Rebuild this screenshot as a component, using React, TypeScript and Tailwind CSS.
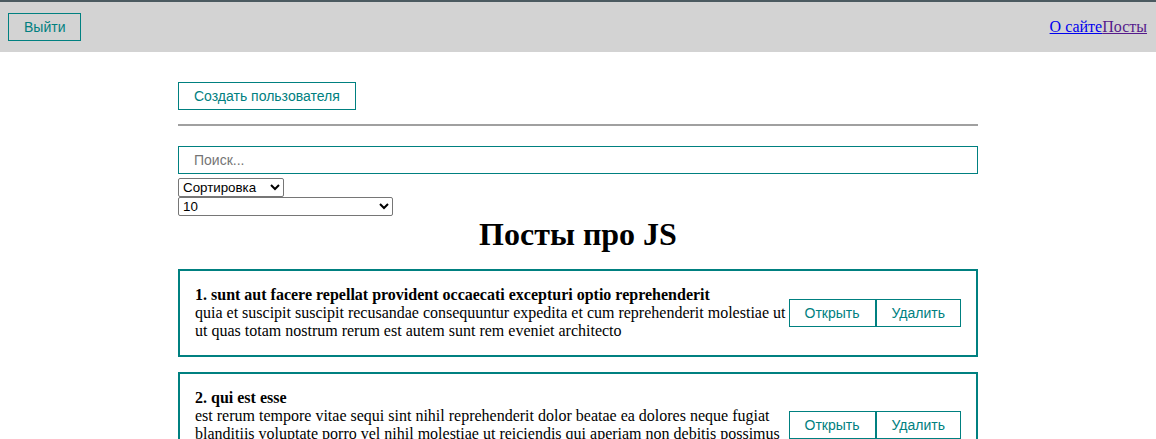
const posts = [
  {
    id: 1,
    title: "sunt aut facere repellat provident occaecati excepturi optio reprehenderit",
    body: "quia et suscipit suscipit recusandae consequuntur expedita et cum reprehenderit molestiae ut ut quas totam nostrum rerum est autem sunt rem eveniet architecto",
  },
  {
    id: 2,
    title: "qui est esse",
    body: "est rerum tempore vitae sequi sint nihil reprehenderit dolor beatae ea dolores neque fugiat blanditiis voluptate porro vel nihil molestiae ut reiciendis qui aperiam non debitis possimus qui neque nisi nulla",
  },
  {
    id: 3,
    title: "ea molestias quasi exercitationem repellat qui ipsa sit aut",
    body: "et iusto sed quo iure voluptatem occaecati omnis eligendi aut ad voluptatem doloribus vel accusantium quis pariatur molestiae porro eius odio et labore et velit aut",
  },
];

const btn =
  "px-[15px] py-[5px] border border-[teal] text-[teal] bg-transparent text-[14px] leading-[16px] font-['Liberation_Sans',Arial,sans-serif]";

const PostItem = ({ post, n }: any) => {
  return (
    <div className="flex items-center justify-between border-2 border-[teal] p-[15px] mb-[15px]">
      <div className="text-black text-[16px] leading-[18px]">
        <strong>
          {n}. {post.title}
        </strong>
        <div>{post.body}</div>
      </div>
      <div className="flex shrink-0">
        <button className={btn}>Открыть</button>
        <button className={btn}>Удалить</button>
      </div>
    </div>
  );
};

export default function App() {
  return (
    <div className="min-h-[439px] bg-white font-['Liberation_Serif','Times_New_Roman',serif]">
      <div className="flex items-center justify-between h-[52px] px-[8px] bg-[lightgray] border-t-2 border-[#4b5a60]">
        <button className={btn}>Выйти</button>
        <div className="text-[16px] pr-[1px]">
          <a href="#" className="text-[#0000ee] underline">
            О сайте
          </a>
          <a href="#" className="text-[#551a8b] underline">
            Посты
          </a>
        </div>
      </div>

      <div className="w-[800px] mx-auto pt-[30px]">
        <button className={btn}>Создать пользователя</button>
        <hr className="mt-[14px] mb-[20px] border-0 border-t-2 border-[#a0a0a0]" />
        <input
          className="block w-full h-[28px] px-[15px] border border-[teal] text-[14px] font-['Liberation_Sans',Arial,sans-serif] placeholder:text-[#757575] outline-none"
          placeholder="Поиск..."
        />
        <div className="mt-[4px] flex flex-col items-start font-['Liberation_Sans',Arial,sans-serif] text-[13.33px]">
          <select className="w-[106px] h-[19px] border border-[#767676] rounded-[2px] text-black">
            <option>Сортировка</option>
            <option>По названию</option>
            <option>По описанию</option>
          </select>
          <select className="w-[215px] h-[19px] border border-[#767676] rounded-[2px] text-black">
            <option>10</option>
            <option>5</option>
            <option>25</option>
            <option>Показать все</option>
          </select>
        </div>
        <h1 className="text-center text-[32px] font-bold leading-[37px] mb-[16px]">Посты про JS</h1>
        {posts.map((p, i) => (
          <PostItem key={p.id} post={p} n={i + 1} />
        ))}
      </div>
    </div>
  );
}
